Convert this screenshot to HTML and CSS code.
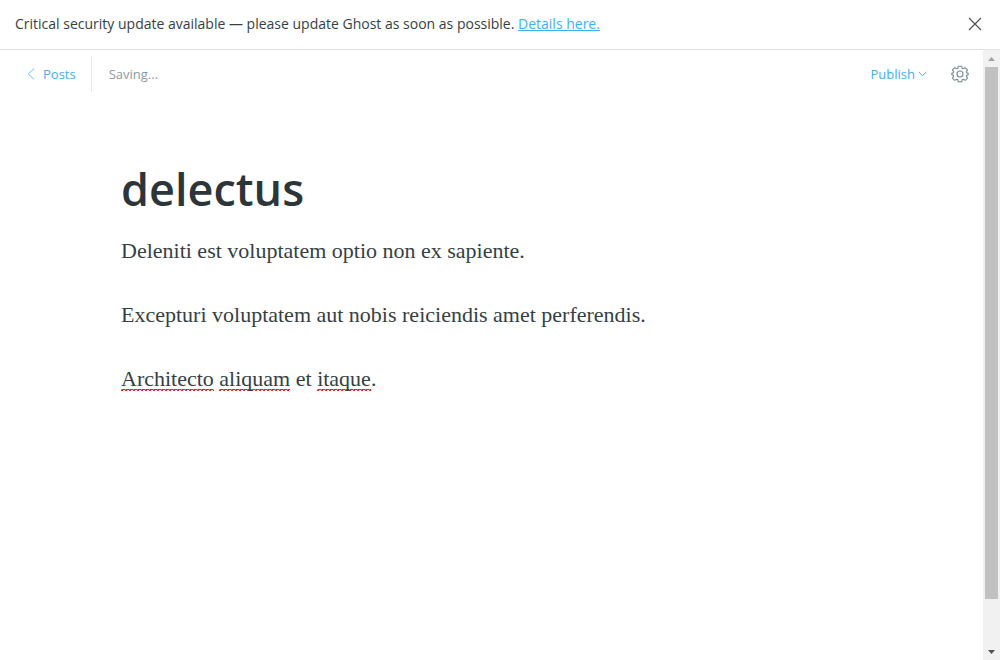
FILE: index.html
```html
<!DOCTYPE html>
<html lang="en">
<head>
<meta charset="utf-8">
<meta name="viewport" content="width=device-width, initial-scale=1">
<title>Editor - Ghost</title>
<link rel="stylesheet" href="styles.css">
</head>
<body>
<aside class="alert">
  <p class="alert-text">Critical security update available — please update Ghost as soon as possible. <a class="alert-link" href="#details">Details here.</a></p>
  <button class="icon-button" type="button" aria-label="Close">
    <svg class="icon-close" viewBox="0 0 14 14"><path d="M1 1l12 12M13 1L1 13"/></svg>
  </button>
</aside>
<div class="viewport">
  <main class="editor">
    <header class="toolbar">
      <a class="back" href="#posts">
        <svg class="icon-back" viewBox="0 0 8 12"><path d="M7 .7L1.2 6 7 11.3"/></svg>
        Posts
      </a>
      <span class="status">Saving...</span>
      <button class="publish" type="button">
        Publish
        <svg class="icon-down" viewBox="0 0 9 6"><path d="M.8 .8L4.5 4.8 8.2 .8"/></svg>
      </button>
      <button class="icon-button" type="button" aria-label="Settings">
        <svg class="icon-gear" viewBox="0 0 18 18"><circle cx="9" cy="9" r="3"/><path d="M7.3 1.2h3.4l.5 2.1 1.1.5 1.9-1.2 2.3 2.3-1.1 1.9.5 1.1 1.3.4v1.4l-1.3.4-.5 1.1 1.1 1.9-2.3 2.3-1.9-1.2-1.1.5-.5 2.1H7.3l-.5-2.1-1.1-.5-1.9 1.2-2.3-2.3 1.1-1.9-.5-1.1-1.3-.4V8.3l1.3-.4.5-1.1-1.1-1.9 2.3-2.3 1.9 1.2 1.1-.5z"/></svg>
      </button>
    </header>
    <article class="post">
      <input class="post-title" type="text" aria-label="Post title" value="delectus" spellcheck="false">
      <div class="post-body" contenteditable="true" spellcheck="false">
        <p>Deleniti est voluptatem optio non ex sapiente.</p>
        <p>Excepturi voluptatem aut nobis reiciendis amet perferendis.</p>
        <p><span class="misspelled">Architecto</span> <span class="misspelled">aliquam</span> et <span class="misspelled">itaque</span>.</p>
      </div>
    </article>
  </main>
  <div class="scrollbar" aria-hidden="true">
    <svg class="arrow arrow-up" viewBox="0 0 7 4"><path d="M0 4h7L3.5 0z"/></svg>
    <div class="track"><div class="thumb"></div></div>
    <svg class="arrow arrow-down" viewBox="0 0 7 4"><path d="M0 0h7L3.5 4z"/></svg>
  </div>
</div>
</body>
</html>
```
FILE: styles.css
```css
* { box-sizing: border-box; }
body {
  margin: 0;
  min-height: 100vh;
  display: flex;
  flex-direction: column;
  background: #fff;
  color: #343f44;
  font: 13px/20px "Open Sans", "Noto Sans", sans-serif;
}
button {
  border: 0;
  padding: 0;
  background: none;
  font: inherit;
  cursor: pointer;
}
svg { display: block; fill: none; stroke: currentColor; }
.alert {
  display: flex;
  align-items: center;
  justify-content: space-between;
  padding: 14px 18px 15px 15px;
  border-bottom: 1px solid #dfe1e3;
  font-size: 14px;
}
.alert-text { margin: 0; }
.alert-link { color: #3eb0ef; }
.icon-button { color: #54666d; }
.icon-close { width: 14px; height: 14px; stroke: #4a5459; stroke-width: 1.2; }
.viewport { flex: 1; display: flex; }
.editor { flex: 1; min-width: 0; }
.toolbar {
  display: flex;
  align-items: center;
  padding: 6px 14px 6px 27px;
}
.back {
  display: flex;
  align-items: center;
  gap: 8px;
  padding: 8px 15px 8px 0;
  border-right: 1px solid #dfe9ef;
  color: #3eb0ef;
  text-decoration: none;
}
.icon-back { width: 8px; height: 12px; stroke-width: 0.8; }
.status { flex: 1; padding-left: 17px; color: #8a9ba5; }
.publish {
  display: flex;
  align-items: center;
  gap: 3px;
  margin-right: 24px;
  color: #3eb0ef;
}
.icon-down { width: 9px; height: 6px; stroke: #5fa9cf; }
.icon-gear { width: 18px; height: 18px; stroke: #738a94; stroke-width: 1.1; stroke-linejoin: round; }
.post { padding: 61px 121px 40px; }
.post-title {
  display: block;
  width: 100%;
  border: 0;
  padding: 0;
  outline: 0;
  background: none;
  color: #2b353a;
  font: 600 45px/60px "Open Sans", "Noto Sans", sans-serif;
}
.post-body {
  margin-top: 16px;
  outline: 0;
  font: 22px/32px "Liberation Serif", Georgia, serif;
}
.post-body p { margin: 0 0 32px; }
.misspelled {
  background:
    repeating-linear-gradient(90deg, #f02020 0 2px, transparent 2px 4px) 0 100% / 100% 1px no-repeat,
    repeating-linear-gradient(90deg, #f0202080 0 1px, #f02020 1px 4px) 0 calc(100% - 1px) / 100% 1px no-repeat;
}
.scrollbar {
  width: 17px;
  display: flex;
  flex-direction: column;
  align-items: center;
  background: #f1f1f1;
}
.arrow { width: 7px; height: 4px; margin: 7px 0 6px; stroke: none; }
.arrow-up { fill: #a3a3a3; }
.arrow-down { fill: #505050; }
.track { flex: 1; }
.thumb { width: 13px; height: 92.4%; background: #c1c1c1; }
```
